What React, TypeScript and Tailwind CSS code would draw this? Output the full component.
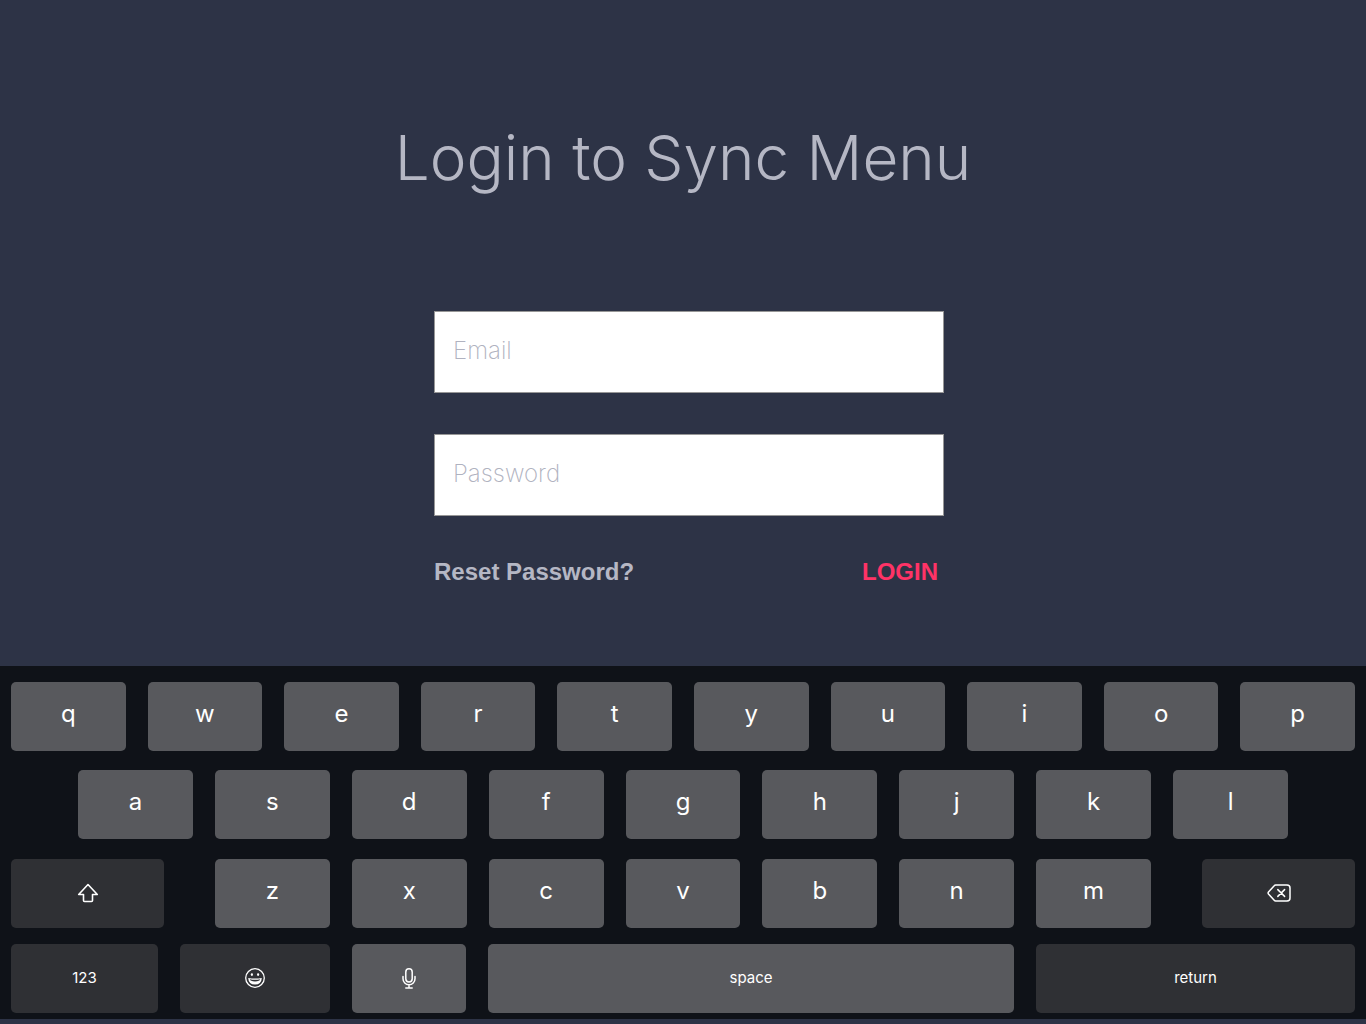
import type { ReactNode } from "react";

type KeyProps = {
  children: ReactNode;
  label?: string;
  tone?: "light" | "dark";
  size?: "letter" | "word";
};

function Key({ children, label, tone = "light", size = "letter" }: KeyProps) {
  return (
    <button
      type="button"
      aria-label={label}
      className={`flex h-[69px] min-w-0 items-center justify-center rounded-[5px] text-white ${
        tone === "light" ? "bg-[#58595d]" : "bg-[#2f3034]"
      } ${size === "letter" ? "pb-1.5 text-2xl" : "pb-px text-[15px]"}`}
    >
      {children}
    </button>
  );
}

function Letters({ keys }: { keys: string }) {
  return (
    <>
      {keys.split("").map((k) => (
        <Key key={k}>{k}</Key>
      ))}
    </>
  );
}

function ShiftIcon() {
  return (
    <svg width="22" height="20" viewBox="0 0 22 20" fill="none" stroke="currentColor" strokeWidth="1.6" strokeLinejoin="round" aria-hidden="true">
      <path d="M11 1.5 L20.3 11.5 H15.5 V17.5 Q15.5 18.5 14.5 18.5 H7.5 Q6.5 18.5 6.5 17.5 V11.5 H1.7 Z" />
    </svg>
  );
}

function DeleteIcon() {
  return (
    <svg width="24" height="18" viewBox="0 0 24 18" fill="none" stroke="currentColor" strokeWidth="1.5" strokeLinecap="round" strokeLinejoin="round" aria-hidden="true">
      <path d="M8.6 1 H20 Q23 1 23 4 V14 Q23 17 20 17 H8.6 Q7.8 17 7.2 16.3 L1.5 10 Q.7 9 1.5 8 L7.2 1.7 Q7.8 1 8.6 1 Z" />
      <path d="M10.8 5.6 L17.6 12.4 M17.6 5.6 L10.8 12.4" />
    </svg>
  );
}

function SmileIcon() {
  return (
    <svg width="20" height="20" viewBox="0 0 20 20" fill="none" stroke="currentColor" aria-hidden="true">
      <circle cx="10" cy="10" r="9.3" strokeWidth="1.3" />
      <ellipse cx="6.9" cy="6.6" rx="1.1" ry="1.3" fill="currentColor" stroke="none" />
      <ellipse cx="13.1" cy="6.6" rx="1.1" ry="1.3" fill="currentColor" stroke="none" />
      <path d="M3.2 10 Q10 11.2 16.8 10 Q16.4 16.6 10 16.6 Q3.6 16.6 3.2 10 Z" fill="currentColor" stroke="none" />
      <path d="M4.8 11.3 Q10 12.3 15.2 11.3 Q14.8 13.4 10 13.4 Q5.2 13.4 4.8 11.3 Z" fill="#2f3034" stroke="none" />
    </svg>
  );
}

function MicIcon() {
  return (
    <svg width="14" height="21" viewBox="0 0 14 21" fill="none" stroke="currentColor" strokeWidth="1.5" strokeLinecap="round" aria-hidden="true">
      <rect x="3.8" y="0.8" width="6.4" height="13.2" rx="3.2" />
      <path d="M1 8.5 V10.8 A6 6 0 0 0 13 10.8 V8.5 M7 17 V20 M3.8 20 H10.2" />
    </svg>
  );
}

function Field({ label, type }: { label: string; type: string }) {
  return (
    <input
      type={type}
      aria-label={label}
      placeholder={label}
      className="h-[82px] w-full border border-[#979797] bg-white px-[18px] pb-1 text-2xl font-extralight text-[#2d3346] outline-none placeholder:text-[#b0b2c0]"
    />
  );
}

export default function App() {
  return (
    <div className="flex min-h-screen flex-col bg-[#2d3346] font-['Inter',sans-serif]">
      <main className="flex flex-1 flex-col items-center px-4 pb-16">
        <h1 className="mt-[118px] text-center text-[62px] leading-[80px] font-light text-[#b5b7c4]">
          Login to Sync Menu
        </h1>
        <form className="mt-[113px] w-full max-w-[522px] pl-3" onSubmit={(e) => e.preventDefault()}>
          <div className="flex flex-col gap-[41px]">
            <Field label="Email" type="email" />
            <Field label="Password" type="password" />
          </div>
          <div className="mt-10 flex items-center justify-between pr-1.5 font-['Liberation_Sans',sans-serif] text-2xl font-bold">
            <a href="#reset" className="text-[#b5b7c4]">
              Reset Password?
            </a>
            <button type="submit" className="text-[#ff3366]">
              LOGIN
            </button>
          </div>
        </form>
      </main>

      <section aria-label="Keyboard" className="mb-[5px] flex flex-col bg-[#0f1218] px-[11px] pt-4 pb-[6px]">
        <div className="grid grid-cols-10 gap-x-[22px]">
          <Letters keys="qwertyuiop" />
        </div>
        <div className="mt-[19px] grid grid-cols-9 gap-x-[22px] px-[67px]">
          <Letters keys="asdfghjkl" />
        </div>
        <div className="mt-5 grid grid-cols-[153fr_936fr_153fr] gap-x-[51px]">
          <Key tone="dark" size="word" label="shift">
            <ShiftIcon />
          </Key>
          <div className="grid grid-cols-7 gap-x-[22px]">
            <Letters keys="zxcvbnm" />
          </div>
          <Key tone="dark" size="word" label="delete">
            <DeleteIcon />
          </Key>
        </div>
        <div className="mt-4 grid grid-cols-[147fr_150fr_114fr_526fr_319fr] gap-x-[22px]">
          <Key tone="dark" size="word">
            123
          </Key>
          <Key tone="dark" size="word" label="emoji">
            <SmileIcon />
          </Key>
          <Key size="word" label="dictation">
            <MicIcon />
          </Key>
          <Key size="word">space</Key>
          <Key tone="dark" size="word">
            return
          </Key>
        </div>
      </section>
    </div>
  );
}
